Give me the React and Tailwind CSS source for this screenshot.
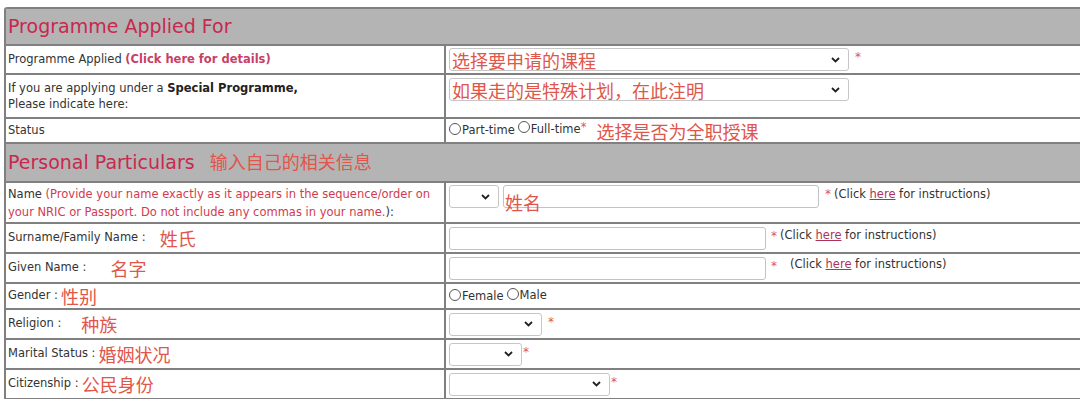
import React from 'react';

const sans = { fontFamily: '"DejaVu Sans", Verdana, sans-serif' };
const cjk = { fontFamily: '"Noto Sans CJK SC", sans-serif' };

function Note({ children, className = '' }) {
  return (
    <span className={`text-[18px] leading-[20px] text-[#e0564a] ${className}`} style={cjk}>
      {children}
    </span>
  );
}

function Star({ className = '' }) {
  return <span className={`text-[12px] leading-none text-[#e0564a] self-start ${className}`}>*</span>;
}

function Chevron() {
  return (
    <svg width="9" height="6" viewBox="0 0 9 6" className="shrink-0">
      <path d="M1 1l3.5 3.5L8 1" fill="none" stroke="#222" strokeWidth="1.8" />
    </svg>
  );
}

function Select({ w, children }) {
  return (
    <div
      className={`${w} h-[23px] flex items-center justify-between border border-[#c6c6c6] rounded-[3px] bg-white pl-[2px] pr-[8px] shrink-0`}
    >
      <div className="flex items-center">{children}</div>
      <Chevron />
    </div>
  );
}

function Input({ w, children }) {
  return (
    <div className={`${w} h-[23px] relative border border-[#c2c2c2] rounded-[3px] bg-white shrink-0`}>
      {children}
    </div>
  );
}

function Radio({ label }) {
  return (
    <span className="inline-flex items-center">
      <span className="w-[12px] h-[12px] rounded-full border border-[#555] bg-white -translate-y-[2px]" />
      <span className="ml-[1px]">{label}</span>
    </span>
  );
}

function Here() {
  return <span className="text-[#a8345a] underline">here</span>;
}

function Row({ h, left, right, rightClass = 'items-center', leftClass = 'items-center' }) {
  return (
    <div className={`flex ${h} border-t-2 border-[#808080]`}>
      <div className={`w-[440px] shrink-0 flex ${leftClass} pl-[2px] border-r-2 border-[#808080]`}>{left}</div>
      <div className={`flex-1 flex ${rightClass} pl-[3px]`}>{right}</div>
    </div>
  );
}

function Header({ h, children }) {
  return (
    <div className={`flex items-center ${h} border-t-2 border-[#808080] bg-[#b4b4b4] pl-[2px]`}>
      {children}
    </div>
  );
}

export default function App() {
  return (
    <div className="w-[1080px] h-[399px] overflow-hidden bg-white text-[11.5px] text-[#333]" style={sans}>
      <div className="ml-[4px] mt-[7px] w-[1090px] border-l-2 border-[#808080] rounded-tl-[3px] overflow-hidden">
        <Header h="h-[37px]">
          <span className="text-[19px] text-[#c8284f]">Programme Applied For</span>
        </Header>

        <Row
          h="h-[29px]"
          left={
            <span>
              Programme Applied <b className="text-[#c83f66]">(Click here for details)</b>
            </span>
          }
          right={
            <>
              <Select w="w-[400px]">
                <Note>选择要申请的课程</Note>
              </Select>
              <Star className="ml-[6px] mt-[5px]" />
            </>
          }
        />

        <Row
          h="h-[44px]"
          left={
            <span className="leading-[16px]">
              If you are applying under a <b className="text-[#222]">Special Programme,</b>
              <br />
              Please indicate here:
            </span>
          }
          rightClass="items-start pt-[3px]"
          right={
            <Select w="w-[400px]">
              <Note>如果走的是特殊计划，在此注明</Note>
            </Select>
          }
        />

        <Row
          h="h-[25px]"
          left={<span>Status</span>}
          right={
            <span className="flex items-center">
              <Radio label="Part-time" />
              <span className="ml-[3px]">
                <Radio label="Full-time" />
              </span>
              <span className="text-[#e0564a] -translate-y-[3px]">*</span>
              <Note className="ml-[10px]">选择是否为全职授课</Note>
            </span>
          }
        />

        <Header h="h-[39px]">
          <span className="text-[19px] text-[#c8284f]">Personal Particulars</span>
          <Note className="ml-[15px] -translate-y-[2px]">输入自己的相关信息</Note>
        </Header>

        <Row
          h="h-[41px]"
          left={
            <span className="leading-[18px]">
              Name <span className="text-[#d23a4e]">(Provide your name exactly as it appears in the sequence/order on</span>
              <br />
              <span className="text-[#d23a4e]">your NRIC or Passport. Do not include any commas in your name.</span>):
            </span>
          }
          rightClass="items-start pt-[2px]"
          right={
            <>
              <Select w="w-[50px]" />
              <div className="ml-[4px]">
                <Input w="w-[316px]">
                  <Note className="absolute left-[1px] top-[6px]">姓名</Note>
                </Input>
              </div>
              <Star className="ml-[6px] mt-[3px]" />
              <span className="ml-[3px] mt-[1px]">
                (Click <Here /> for instructions)
              </span>
            </>
          }
        />

        <Row
          h="h-[30px]"
          left={
            <span className="flex items-center">
              Surname/Family Name :<Note className="ml-[14px]">姓氏</Note>
            </span>
          }
          right={
            <>
              <Input w="w-[317px]" />
              <Star className="ml-[5px] mt-[6px]" />
              <span className="ml-[3px] -translate-y-[2px]">
                (Click <Here /> for instructions)
              </span>
            </>
          }
        />

        <Row
          h="h-[30px]"
          left={
            <span className="flex items-center">
              Given Name :<Note className="ml-[24px]">名字</Note>
            </span>
          }
          right={
            <>
              <Input w="w-[317px]" />
              <Star className="ml-[5px] mt-[6px]" />
              <span className="ml-[13px] -translate-y-[3px]">
                (Click <Here /> for instructions)
              </span>
            </>
          }
        />

        <Row
          h="h-[26px]"
          left={
            <span className="flex items-center">
              Gender :<Note className="ml-[3px]">性别</Note>
            </span>
          }
          right={
            <span className="flex items-center pt-[2px]">
              <Radio label="Female" />
              <span className="ml-[3px]">
                <Radio label="Male" />
              </span>
            </span>
          }
        />

        <Row
          h="h-[30px]"
          left={
            <span className="flex items-center">
              Religion :<Note className="ml-[20px]">种族</Note>
            </span>
          }
          right={
            <>
              <Select w="w-[93px]" />
              <Star className="ml-[6px] mt-[6px]" />
            </>
          }
        />

        <Row
          h="h-[30px]"
          left={
            <span className="flex items-center">
              Marital Status :<Note className="ml-[3px]">婚姻状况</Note>
            </span>
          }
          right={
            <>
              <Select w="w-[73px]" />
              <Star className="ml-[1px] mt-[6px]" />
            </>
          }
        />

        <Row
          h="h-[30px]"
          left={
            <span className="flex items-center">
              Citizenship :<Note className="ml-[3px]">公民身份</Note>
            </span>
          }
          right={
            <>
              <Select w="w-[161px]" />
              <Star className="ml-[1px] mt-[6px]" />
            </>
          }
        />
        <div className="border-t-2 border-[#808080]" />
      </div>
    </div>
  );
}
